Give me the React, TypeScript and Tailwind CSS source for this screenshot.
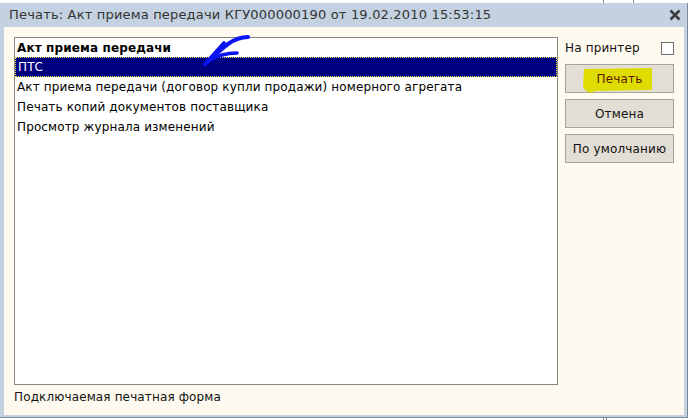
import React from "react";

const font = { fontFamily: '"DejaVu Sans", Verdana, sans-serif' };

function Btn({ children, highlight }: { children: React.ReactNode; highlight?: boolean }) {
  return (
    <div className="relative h-[29px] w-[109px] bg-[#e3ded5] border border-[#a8a49c] flex items-center justify-center text-[12px] text-[#111] tracking-[0.15px]">
      {highlight && (
        <svg className="absolute left-[16px] top-[3px]" width="72" height="25" viewBox="0 0 72 25">
          <path d="M2 1 L70 0 L70 22 L14 23 L9 25 L4 23 L1 19 Z" fill="#dedc00" />
        </svg>
      )}
      <span className={"relative " + (highlight ? "text-[#5a1a00]" : "")}>{children}</span>
    </div>
  );
}

export default function App() {
  const rows = [
    "Акт приема передачи (договор купли продажи) номерного агрегата",
    "Печать копий документов поставщика",
    "Просмотр журнала изменений",
  ];
  return (
    <div className="relative w-[688px] h-[420px] bg-white overflow-hidden" style={font}>
      <div className="absolute left-[603px] top-0 w-px h-[3px] bg-[#8a8a8a]" />
      <div className="absolute left-[633px] top-0 w-px h-[3px] bg-[#8a8a8a]" />
      <div className="absolute left-[603px] top-[418px] w-px h-[2px] bg-[#8a8a8a]" />
      <div className="absolute left-[606px] top-[418px] w-px h-[2px] bg-[#8a8a8a]" />
      <div className="mt-[3px] w-[688px] h-[415px] bg-[#c3d1e0] border-r border-b border-[#7b8898] flex flex-col pl-[4px] pr-[3px] pb-[2px]">
        <div className="h-[24px] flex items-center justify-between pl-[5px] pr-[3px] shrink-0">
          <span className="text-[13px] text-[#333] tracking-[0.18px]">
            Печать: Акт приема передачи КГУ000000190 от 19.02.2010 15:53:15
          </span>
          <svg width="12" height="12" viewBox="0 0 12 12">
            <path d="M1.5 1.5 L10.5 10.5 M10.5 1.5 L1.5 10.5" stroke="#3c3c3c" strokeWidth="2.6" />
          </svg>
        </div>
        <div className="flex-1 bg-[#fffaef] flex flex-col pl-[10px] pt-[10px]">
          <div className="flex">
            <div className="relative w-[544px] h-[348px] bg-white border border-[#8a8682] text-[12px] text-black tracking-[0.13px]">
              <div className="h-[19px] flex items-center pl-[2px] font-bold">Акт приема передачи</div>
              <div className="h-[20px] flex items-center pl-[2px] bg-[#000080] text-white border border-dotted border-[#e8e040]">
                ПТС
              </div>
              {rows.map((r) => (
                <div key={r} className="h-[20px] flex items-center pl-[2px]">
                  {r}
                </div>
              ))}
              <svg className="absolute left-[170px] top-[-8px]" width="70" height="40" viewBox="170 29 70 40">
                <path
                  d="M190 63 C198 56 206 48 213 43 C220 38 226 36 233 36"
                  stroke="#0a14f0"
                  strokeWidth="4.2"
                  fill="none"
                  strokeLinecap="round"
                />
                <path d="M191 62 L209 42" stroke="#0a14f0" strokeWidth="3.6" strokeLinecap="round" />
                <path d="M193 60 C203 54 212 52 222 52" stroke="#0a14f0" strokeWidth="3.6" fill="none" strokeLinecap="round" />
              </svg>
            </div>
            <div className="ml-[7px] w-[109px] flex flex-col">
              <div className="h-[20px] flex items-center justify-between text-[12px] text-[#111] mt-[1px] tracking-[0.15px]">
                <span>На принтер</span>
                <div className="w-[13px] h-[13px] border border-[#6f6f6f] bg-white" />
              </div>
              <div className="mt-[6px] flex flex-col gap-[6px]">
                <Btn highlight>Печать</Btn>
                <Btn>Отмена</Btn>
                <Btn>По умолчанию</Btn>
              </div>
            </div>
          </div>
          <div className="mt-[2px] h-[20px] flex items-center text-[12px] text-[#111] tracking-[0.13px]">Подключаемая печатная форма</div>
        </div>
      </div>
    </div>
  );
}
